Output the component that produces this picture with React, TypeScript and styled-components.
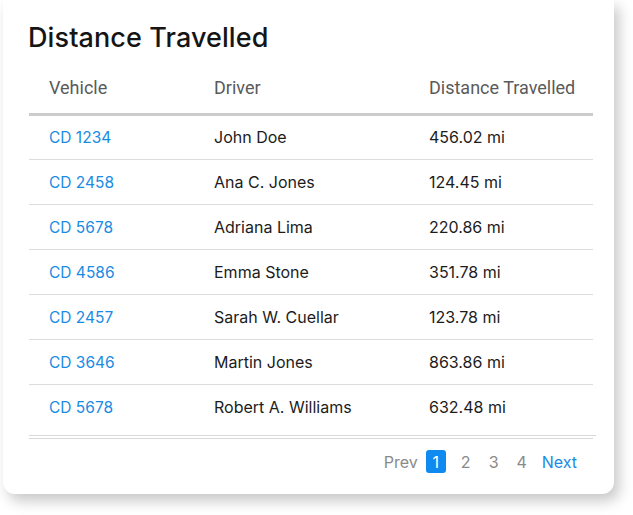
import React from 'react';
import styled, {createGlobalStyle} from 'styled-components';

const GlobalStyle = createGlobalStyle`
  html, body {
    margin: 0;
    padding: 0;
    background: #ffffff;
  }
  * { box-sizing: border-box; }
`;

const Page = styled.div`
  width: 633px;
  height: 515px;
  padding: 0 19px 21px 3px;
`;

const Card = styled.section`
  height: 494px;
  background: #ffffff;
  border-radius: 0 0 12px 12px;
  box-shadow: 5px 7px 14px rgba(0, 0, 0, 0.22);
  padding: 21px 18px 0 26px;
`;

const Title = styled.h2`
  margin: 0 0 13px -1px;
  font-family: Inter, "Open Sans", sans-serif;
  font-weight: 500;
  font-size: 27px;
  line-height: 34px;
  color: #151515;
  letter-spacing: 0.1px;
`;

const TableWrap = styled.div`
  border-bottom: 1px solid #d9d9d9;
  padding-bottom: 6px;
`;

const Table = styled.table`
  width: 564px;
  border-collapse: collapse;
  table-layout: fixed;

  th, td {
    text-align: left;
    padding: 0 0 0 20px;
    white-space: nowrap;
  }

  th {
    height: 46px;
    padding-bottom: 6px;
    font-family: Roboto, sans-serif;
    font-weight: 400;
    font-size: 18px;
    color: #5a5a5a;
    border-bottom: 3px solid #cccccc;
  }

  td {
    height: 45px;
    font-family: Inter, "Open Sans", sans-serif;
    font-size: 16px;
    color: #1c1c1c;
    border-bottom: 1px solid #dcdcdc;
  }

  tbody tr:last-child td {
    border-bottom: none;
  }
`;

const VehicleLink = styled.a`
  color: #1a8be3;
  font-size: 15.5px;
  text-decoration: none;
`;

const Pager = styled.nav`
  margin-top: 2px;
  border-top: 1px solid #d9d9d9;
  width: 564px;
  height: 46px;
  display: flex;
  align-items: center;
  justify-content: flex-end;
  padding-right: 16px;
  font-family: Inter, "Open Sans", sans-serif;
  font-size: 16px;
`;

const PageItem = styled.span<{ $active?: boolean; $tone?: 'muted' | 'link' }>`
  display: inline-flex;
  align-items: center;
  justify-content: center;
  min-width: 20px;
  height: 23px;
  margin-left: ${p => p.$tone === 'link' ? '10px' : '8px'};
  margin-right: ${p => p.$active ? '2px' : '0'};
  border-radius: 3px;
  color: ${p => p.$active ? '#ffffff' : p.$tone === 'link' ? '#1a8be3' : '#8a8a8a'};
  background: ${p => p.$active ? '#0f8af0' : 'transparent'};
`;

const rows = [
  ['CD 1234', 'John Doe', '456.02 mi'],
  ['CD 2458', 'Ana C. Jones', '124.45 mi'],
  ['CD 5678', 'Adriana Lima', '220.86 mi'],
  ['CD 4586', 'Emma Stone', '351.78 mi'],
  ['CD 2457', 'Sarah W. Cuellar', '123.78 mi'],
  ['CD 3646', 'Martin Jones', '863.86 mi'],
  ['CD 5678', 'Robert A. Williams', '632.48 mi'],
];

export default function App() {
  return (
    <Page>
      <GlobalStyle/>
      <Card>
        <Title>Distance Travelled</Title>
        <TableWrap>
          <Table>
            <colgroup>
              <col style={{width: 165}}/>
              <col style={{width: 215}}/>
              <col style={{width: 184}}/>
            </colgroup>
            <thead>
              <tr>
                <th>Vehicle</th>
                <th>Driver</th>
                <th>Distance Travelled</th>
              </tr>
            </thead>
            <tbody>
              {rows.map(([vehicle, driver, distance], i) => (
                <tr key={i}>
                  <td><VehicleLink href="#">{vehicle}</VehicleLink></td>
                  <td>{driver}</td>
                  <td>{distance}</td>
                </tr>
              ))}
            </tbody>
          </Table>
        </TableWrap>
        <Pager>
          <PageItem $tone="muted">Prev</PageItem>
          <PageItem $active>1</PageItem>
          <PageItem $tone="muted">2</PageItem>
          <PageItem $tone="muted">3</PageItem>
          <PageItem $tone="muted">4</PageItem>
          <PageItem $tone="link">Next</PageItem>
        </Pager>
      </Card>
    </Page>
  );
}
